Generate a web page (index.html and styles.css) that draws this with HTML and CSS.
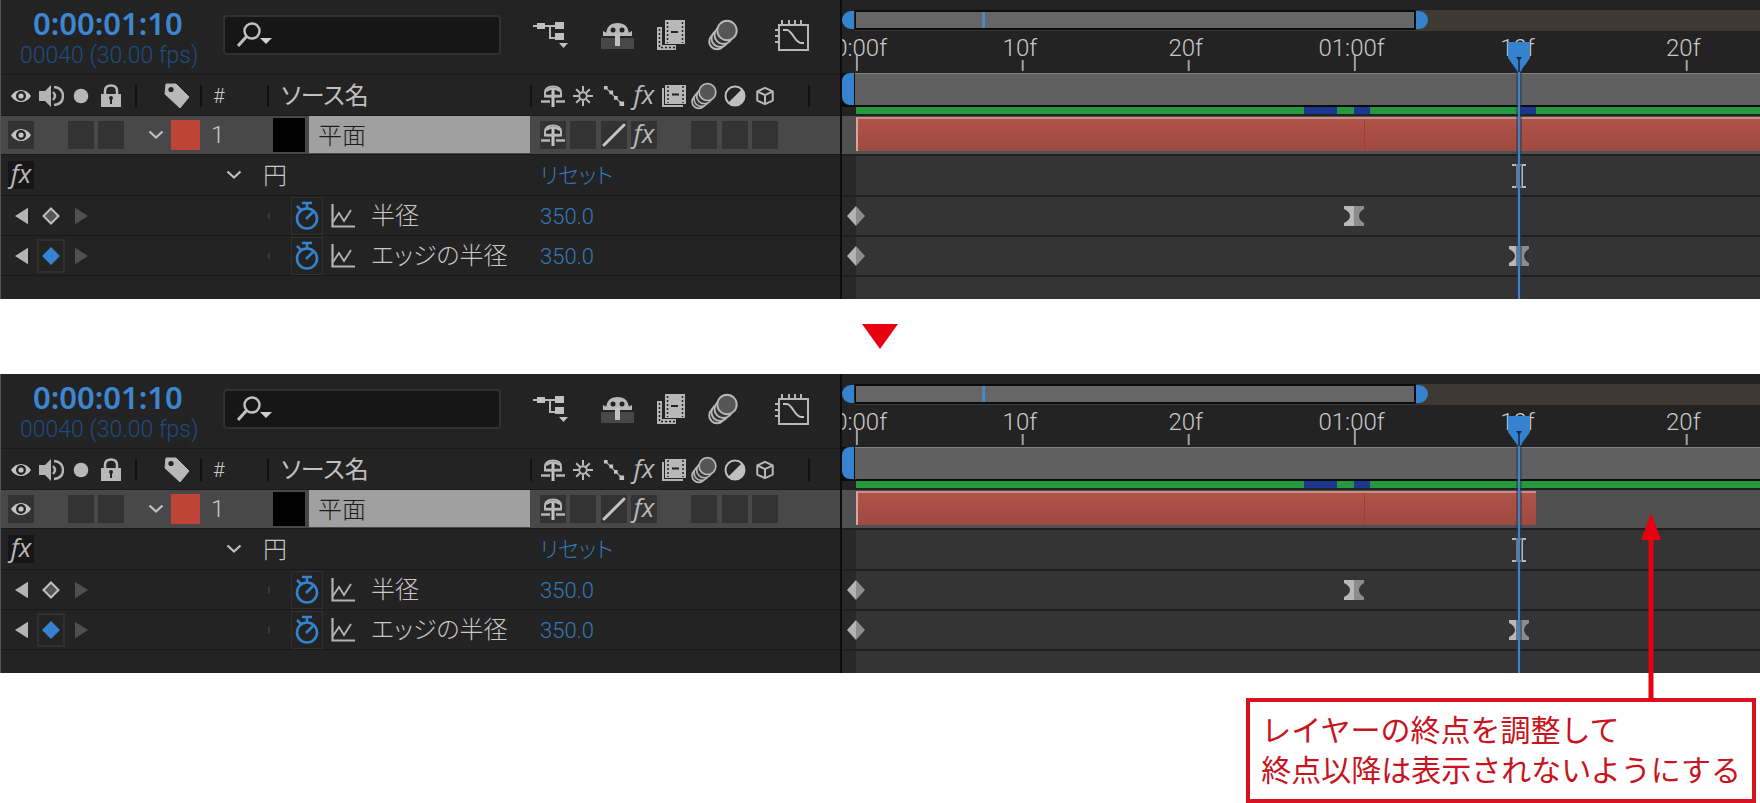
FILE: index.html
```html
<!DOCTYPE html>
<html lang="ja">
<head>
<meta charset="utf-8">
<title>タイムライン</title>
<link rel="stylesheet" href="styles.css">
</head>
<body>
<svg class="sprite" aria-hidden="true">
  <symbol id="eye" viewBox="0 0 22 16"><path d="M1 8C6 0 16 0 21 8C16 16 6 16 1 8Z" fill="#c4c4c4"/><circle cx="11" cy="8" r="5" fill="#242424"/><circle cx="11" cy="8" r="2.6" fill="#c4c4c4"/></symbol>
  <symbol id="speaker" viewBox="0 0 26 24"><path d="M1 7h6v10H1zM7 7l6-6v22l-6-6z" fill="#b4b4b4"/><path d="M15 8q4 4 0 8M16 3q9 1 9 9t-9 9" fill="none" stroke="#b4b4b4" stroke-width="2.400"/></symbol>
  <symbol id="dot" viewBox="0 0 16 16"><circle cx="8" cy="8" r="7.300" fill="#b8b8b8"/></symbol>
  <symbol id="lock" viewBox="0 0 20 24"><path d="M0 10h20v13H0z" fill="#b8b8b8"/><path d="M4 10V7q0-5.500 6-5.500t6 5.500v3" fill="none" stroke="#b8b8b8" stroke-width="2.500"/><circle cx="10" cy="14" r="2" fill="#222"/><path d="M9 14h2v6H9z" fill="#222"/></symbol>
  <symbol id="tag" viewBox="0 0 26 26"><path d="M2 1L12 1L25 14L16 25L1 11Z" fill="#b8b8b8" stroke="#b8b8b8" stroke-linejoin="round"/><circle cx="7" cy="6.500" r="2.600" fill="#222"/></symbol>
  <symbol id="chevron" viewBox="0 0 16 10"><path d="M1.500 1.500L8 7.500L14.500 1.500" fill="none" stroke="#c0c0c0" stroke-width="2.200"/></symbol>
  <symbol id="shy" viewBox="0 0 26 24"><path d="M5 12.500V9Q5 2.500 13 2.500t8 6.500v3.500z" fill="#242424" stroke="#b8b8b8" stroke-width="2"/><path d="M11.500 4h3v19h-3z" fill="#c4c4c4"/><path d="M6 12h14" stroke="#b8b8b8" stroke-width="2.500"/><path d="M6 7q7-5 14 0" fill="none" stroke="#b8b8b8" stroke-width="2.500"/><path d="M1 17.500h9M16 17.500h9" stroke="#b4b4b4" stroke-width="2.500"/></symbol>
  <symbol id="sun" viewBox="0 0 22 22"><circle cx="11" cy="11" r="4.200" fill="none" stroke="#b8b8b8" stroke-width="2.200"/><path d="M11 0v6M11 16v6M0 11h6M16 11h6M3.500 3.500l4 4M14.500 14.500l4 4M18.500 3.500l-4 4M7.500 14.500l-4 4" stroke="#b8b8b8" stroke-width="2.200"/></symbol>
  <symbol id="steps" viewBox="0 0 24 24"><path d="M2 2L22 22" stroke="#999" stroke-width="1.500"/><path d="M1 1h4v4H1zM7 6h4v4H7zM12 12h4v4h-4zM18 18h5v5h-5z" fill="#c4c4c4"/></symbol>
  <symbol id="slash" viewBox="0 0 24 24"><path d="M2 22L22 2" stroke="#c4c4c4" stroke-width="3" stroke-linecap="round"/></symbol>
  <symbol id="film" viewBox="0 0 26 24"><path d="M2 4v18h20" fill="none" stroke="#b4b4b4" stroke-width="2"/><path d="M4 1h21v19H4z" fill="#b8b8b8"/><path d="M7 2v17M22 2v17" stroke="#222" stroke-width="1.500" stroke-dasharray="2 2"/><path d="M11 10.500h7" stroke="#222" stroke-width="2"/></symbol>
  <symbol id="film-large" viewBox="0 0 30 32"><path d="M1 8h5v18h14v5H1z" fill="#b4b4b4"/><path d="M9 1h20v24H9z" fill="#b8b8b8"/><path d="M11.500 3v21M26.500 3v21M3.500 10v20" stroke="#222" stroke-width="1.500" stroke-dasharray="2 2"/><path d="M5 28.500h14" stroke="#222" stroke-width="1.500" stroke-dasharray="2 2"/><path d="M15 13h7" stroke="#222" stroke-width="2"/></symbol>
  <symbol id="blur" viewBox="0 0 30 32"><g fill="#333" stroke="#b8b8b8" stroke-width="1.900"><circle cx="9" cy="22.500" r="7.800"/><circle cx="12" cy="19.500" r="8.500"/><circle cx="15.500" cy="16" r="9"/><circle cx="19" cy="11.500" r="9.700" fill="#565656"/></g></symbol>
  <symbol id="contrast" viewBox="0 0 22 22"><circle cx="11" cy="11" r="9.500" fill="#242424" stroke="#c0c0c0" stroke-width="2"/><path d="M18 4A9.700 9.700 0 0 1 4 18Z" fill="#c0c0c0"/></symbol>
  <symbol id="cube" viewBox="0 0 22 22"><path d="M11 2L19.500 6v10L11 20L2.500 16V6ZM2.500 6L11 10L19.500 6M11 10v10" fill="none" stroke="#b8b8b8" stroke-width="2.200" stroke-linejoin="round"/></symbol>
  <symbol id="flow" viewBox="0 0 36 28"><path d="M0 5h22M17 5v12h6" fill="none" stroke="#b8b8b8" stroke-width="2"/><path d="M4 2h8v6H4zM22 1h9v7h-9zM22 12h9v7h-9zM26 22h9l-4.500 5z" fill="#c0c0c0"/></symbol>
  <symbol id="shy-large" viewBox="0 0 34 28"><path d="M1 17h33v11H1z" fill="#484848"/><path d="M6 13Q7 2 17.500 2T29 13z" fill="#b8b8b8"/><path d="M3 10v5h29v-5l-4 2H7z" fill="#b8b8b8"/><circle cx="13" cy="9" r="2.500" fill="#222"/><circle cx="22" cy="9" r="2.500" fill="#222"/><path d="M15 13h5v12h-5z" fill="#c0c0c0"/></symbol>
  <symbol id="graph" viewBox="0 0 34 34"><path d="M4 7h29v25H4zM7 7V2M14 7V2M20 7V2M26 7V2M4 12H0M4 18H0M4 24H0" fill="none" stroke="#b8b8b8" stroke-width="2"/><path d="M8 12h4c5 0 8 13 14 13h3" fill="none" stroke="#c0c0c0" stroke-width="2"/></symbol>
  <symbol id="search" viewBox="0 0 36 26"><circle cx="15" cy="9" r="7.500" fill="none" stroke="#c0c0c0" stroke-width="2.400"/><path d="M10 14L1 24" stroke="#c0c0c0" stroke-width="3"/><path d="M23 16h12l-6 6z" fill="#d0d0d0"/></symbol>
  <symbol id="prev" viewBox="0 0 14 18"><path d="M14 0v18L0 9Z" fill="#b4b4b4"/></symbol>
  <symbol id="next" viewBox="0 0 14 18"><path d="M0 0v18L14 9Z" fill="#505050"/></symbol>
  <symbol id="key-empty" viewBox="0 0 18 18"><path d="M9 1.500L16.500 9L9 16.500L1.500 9Z" fill="#555" stroke="#c0c0c0" stroke-width="2"/></symbol>
  <symbol id="key-set" viewBox="0 0 18 18"><path d="M9 0L18 9L9 18L0 9Z" fill="#3582cf"/></symbol>
  <symbol id="watch" viewBox="0 0 26 30"><circle cx="13" cy="17.500" r="10" fill="none" stroke="#3582cf" stroke-width="2.600"/><path d="M8 2h10M13 2v5M12 18l7-7M3 5l4 4" stroke="#3582cf" stroke-width="2.500"/></symbol>
  <symbol id="plot" viewBox="0 0 24 24"><path d="M1.500 0v22.500H24" fill="none" stroke="#b4b4b4" stroke-width="2.200"/><path d="M2 18L8 9l5 8L20 6" fill="none" stroke="#b4b4b4" stroke-width="1.800"/></symbol>
  <symbol id="key-linear" viewBox="0 0 18 20"><path d="M9 0L0 10L9 20Z" fill="#b4b4b4"/><path d="M9 0L18 10L9 20Z" fill="#8c8c8c"/></symbol>
  <symbol id="key-ease" viewBox="0 0 20 20"><path d="M0 0h10v20H0v-3q6-3 6-7T0 3z" fill="#b8b8b8"/><path d="M20 0H10v20h10v-3q-5-3-5-7t5-7z" fill="#8c8c8c"/></symbol>
  <symbol id="ibeam" viewBox="0 0 14 24"><path d="M0 1h14M0 23h14M5 1v22M10 1v22" stroke="#b4b8bc" stroke-width="2"/></symbol>
  <symbol id="head" viewBox="0 0 22 30"><path d="M0 0h22v16L12 30h-2L0 16Z" fill="#3582cf"/><path d="M8 15h6l-3 4z" fill="#16283c"/><path d="M11 18v12" stroke="#1b3d63" stroke-width="2"/></symbol>
</svg>

<main class="page">
  <section class="panel">
    <div class="outline">
      <div class="toolbar">
        <div class="time"><span class="timecode">0:00:01:10</span><span class="frames">00040 (30.00 fps)</span></div>
        <label class="search"><svg class="i-search"><use href="#search"/></svg><input type="text" aria-label="検索"></label>
        <div class="tools">
          <button aria-label="フローチャート"><svg class="i-flow"><use href="#flow"/></svg></button>
          <button aria-label="シャイ"><svg class="i-shy-large"><use href="#shy-large"/></svg></button>
          <button aria-label="フレームブレンド"><svg class="i-large"><use href="#film-large"/></svg></button>
          <button aria-label="モーションブラー"><svg class="i-large"><use href="#blur"/></svg></button>
          <button aria-label="グラフエディター"><svg class="i-graph"><use href="#graph"/></svg></button>
        </div>
      </div>
      <div class="row head-row">
        <div class="av"><svg class="i-eye"><use href="#eye"/></svg><svg class="i-26"><use href="#speaker"/></svg><svg class="i-16"><use href="#dot"/></svg><svg class="i-lock"><use href="#lock"/></svg></div>
        <div class="label sep"><svg class="i-26"><use href="#tag"/></svg></div>
        <div class="num sep">#</div>
        <div class="name sep">ソース名</div>
        <div class="switches sep">
          <svg class="i-26"><use href="#shy"/></svg><svg class="i-20"><use href="#sun"/></svg><svg class="i-22"><use href="#steps"/></svg><span class="fx">fx</span><svg class="i-26"><use href="#film"/></svg><svg class="i-28"><use href="#blur"/></svg><svg class="i-22"><use href="#contrast"/></svg><svg class="i-20"><use href="#cube"/></svg>
        </div>
        <div class="sep"></div>
      </div>
      <div class="row layer-row">
        <div class="av"><button class="cell" aria-label="表示"><svg class="i-eye"><use href="#eye"/></svg></button><span></span><button class="cell" aria-label="ソロ"></button><button class="cell" aria-label="ロック"></button></div>
        <div class="label"><button aria-label="開く"><svg class="i-chevron"><use href="#chevron"/></svg></button><span class="swatch"></span></div>
        <div class="num">1</div>
        <div class="name"><span class="thumb"></span><span class="layer-name">平面</span></div>
        <div class="switches">
          <button class="cell" aria-label="シャイ"><svg class="i-26"><use href="#shy"/></svg></button><button class="cell" aria-label="コラップス"></button><button class="cell" aria-label="画質"><svg class="i-24"><use href="#slash"/></svg></button><button class="cell fx">fx</button><span></span><button class="cell" aria-label="モーションブラー"></button><button class="cell" aria-label="調整レイヤー"></button><button class="cell" aria-label="3D"></button>
        </div>
      </div>
      <div class="row prop-row">
        <div class="av"><button class="cell dark fx">fx</button></div>
        <div class="twirl"><button aria-label="開く"><svg class="i-chevron"><use href="#chevron"/></svg></button></div>
        <div class="group">円</div>
        <button class="value reset">リセット</button>
      </div>
      <div class="row prop-row">
        <div class="av"><button aria-label="前のキー"><svg class="i-arrow"><use href="#prev"/></svg></button><button class="key" aria-label="キー"><svg class="i-18"><use href="#key-empty"/></svg></button><button aria-label="次のキー"><svg class="i-arrow"><use href="#next"/></svg></button></div>
        <div></div>
        <div class="prop"><span class="bullet"></span><button class="watch" aria-label="ストップウォッチ"><svg class="i-watch"><use href="#watch"/></svg></button><svg class="i-24"><use href="#plot"/></svg><span class="prop-name">半径</span></div>
        <span class="value">350.0</span>
      </div>
      <div class="row prop-row">
        <div class="av"><button aria-label="前のキー"><svg class="i-arrow"><use href="#prev"/></svg></button><button class="key framed" aria-label="キー"><svg class="i-18"><use href="#key-set"/></svg></button><button aria-label="次のキー"><svg class="i-arrow"><use href="#next"/></svg></button></div>
        <div></div>
        <div class="prop"><span class="bullet"></span><button class="watch" aria-label="ストップウォッチ"><svg class="i-watch"><use href="#watch"/></svg></button><svg class="i-24"><use href="#plot"/></svg><span class="prop-name">エッジの半径</span></div>
        <span class="value">350.0</span>
      </div>
      <div class="row prop-row"></div>
    </div>
    <div class="timeline">
      <div class="navigator"><span class="grip start"></span><div class="nav-track"><div class="nav-range" style="width:62%"><span class="nav-mark"></span></div><span class="grip end"></span></div></div>
      <div class="ruler"><div class="scale">
        <span class="tick major" style="--f:0">00:00f</span><span class="tick" style="--f:10">10f</span><span class="tick" style="--f:20">20f</span><span class="tick major" style="--f:30">01:00f</span><span class="tick" style="--f:40">10f</span><span class="tick" style="--f:50">20f</span>
      </div></div>
      <div class="work"><span class="grip work-start"></span><div class="work-bar"></div></div>
      <div class="cache"><div class="scale"><span class="cached" style="--f:27;--n:2"></span><span class="cached" style="--f:30;--n:1"></span><span class="cached" style="--f:40;--n:1"></span></div></div>
      <div class="track layer-track"><div class="scale"><div class="bar" style="--n:54.5"></div><span class="marker-line" style="--f:30.6"></span></div></div>
      <div class="track"><div class="scale"><svg class="item i-ibeam" style="--f:40"><use href="#ibeam"/></svg></div></div>
      <div class="track"><div class="scale"><svg class="item i-key" style="--f:0"><use href="#key-linear"/></svg><svg class="item i-20" style="--f:30"><use href="#key-ease"/></svg></div></div>
      <div class="track"><div class="scale"><svg class="item i-key" style="--f:0"><use href="#key-linear"/></svg><svg class="item i-20" style="--f:40"><use href="#key-ease"/></svg></div></div>
      <div class="track"></div>
      <div class="overlay"><div class="playhead" style="--f:40"><svg class="i-head"><use href="#head"/></svg></div></div>
    </div>
  </section>

  <svg class="down" viewBox="0 0 36 25" aria-hidden="true"><path d="M0 0h36L18 25Z" fill="#e60012"/></svg>

  <section class="panel">
    <div class="outline">
      <div class="toolbar">
        <div class="time"><span class="timecode">0:00:01:10</span><span class="frames">00040 (30.00 fps)</span></div>
        <label class="search"><svg class="i-search"><use href="#search"/></svg><input type="text" aria-label="検索"></label>
        <div class="tools">
          <button aria-label="フローチャート"><svg class="i-flow"><use href="#flow"/></svg></button>
          <button aria-label="シャイ"><svg class="i-shy-large"><use href="#shy-large"/></svg></button>
          <button aria-label="フレームブレンド"><svg class="i-large"><use href="#film-large"/></svg></button>
          <button aria-label="モーションブラー"><svg class="i-large"><use href="#blur"/></svg></button>
          <button aria-label="グラフエディター"><svg class="i-graph"><use href="#graph"/></svg></button>
        </div>
      </div>
      <div class="row head-row">
        <div class="av"><svg class="i-eye"><use href="#eye"/></svg><svg class="i-26"><use href="#speaker"/></svg><svg class="i-16"><use href="#dot"/></svg><svg class="i-lock"><use href="#lock"/></svg></div>
        <div class="label sep"><svg class="i-26"><use href="#tag"/></svg></div>
        <div class="num sep">#</div>
        <div class="name sep">ソース名</div>
        <div class="switches sep">
          <svg class="i-26"><use href="#shy"/></svg><svg class="i-20"><use href="#sun"/></svg><svg class="i-22"><use href="#steps"/></svg><span class="fx">fx</span><svg class="i-26"><use href="#film"/></svg><svg class="i-28"><use href="#blur"/></svg><svg class="i-22"><use href="#contrast"/></svg><svg class="i-20"><use href="#cube"/></svg>
        </div>
        <div class="sep"></div>
      </div>
      <div class="row layer-row">
        <div class="av"><button class="cell" aria-label="表示"><svg class="i-eye"><use href="#eye"/></svg></button><span></span><button class="cell" aria-label="ソロ"></button><button class="cell" aria-label="ロック"></button></div>
        <div class="label"><button aria-label="開く"><svg class="i-chevron"><use href="#chevron"/></svg></button><span class="swatch"></span></div>
        <div class="num">1</div>
        <div class="name"><span class="thumb"></span><span class="layer-name">平面</span></div>
        <div class="switches">
          <button class="cell" aria-label="シャイ"><svg class="i-26"><use href="#shy"/></svg></button><button class="cell" aria-label="コラップス"></button><button class="cell" aria-label="画質"><svg class="i-24"><use href="#slash"/></svg></button><button class="cell fx">fx</button><span></span><button class="cell" aria-label="モーションブラー"></button><button class="cell" aria-label="調整レイヤー"></button><button class="cell" aria-label="3D"></button>
        </div>
      </div>
      <div class="row prop-row">
        <div class="av"><button class="cell dark fx">fx</button></div>
        <div class="twirl"><button aria-label="開く"><svg class="i-chevron"><use href="#chevron"/></svg></button></div>
        <div class="group">円</div>
        <button class="value reset">リセット</button>
      </div>
      <div class="row prop-row">
        <div class="av"><button aria-label="前のキー"><svg class="i-arrow"><use href="#prev"/></svg></button><button class="key" aria-label="キー"><svg class="i-18"><use href="#key-empty"/></svg></button><button aria-label="次のキー"><svg class="i-arrow"><use href="#next"/></svg></button></div>
        <div></div>
        <div class="prop"><span class="bullet"></span><button class="watch" aria-label="ストップウォッチ"><svg class="i-watch"><use href="#watch"/></svg></button><svg class="i-24"><use href="#plot"/></svg><span class="prop-name">半径</span></div>
        <span class="value">350.0</span>
      </div>
      <div class="row prop-row">
        <div class="av"><button aria-label="前のキー"><svg class="i-arrow"><use href="#prev"/></svg></button><button class="key framed" aria-label="キー"><svg class="i-18"><use href="#key-set"/></svg></button><button aria-label="次のキー"><svg class="i-arrow"><use href="#next"/></svg></button></div>
        <div></div>
        <div class="prop"><span class="bullet"></span><button class="watch" aria-label="ストップウォッチ"><svg class="i-watch"><use href="#watch"/></svg></button><svg class="i-24"><use href="#plot"/></svg><span class="prop-name">エッジの半径</span></div>
        <span class="value">350.0</span>
      </div>
      <div class="row prop-row"></div>
    </div>
    <div class="timeline">
      <div class="navigator"><span class="grip start"></span><div class="nav-track"><div class="nav-range" style="width:62%"><span class="nav-mark"></span></div><span class="grip end"></span></div></div>
      <div class="ruler"><div class="scale">
        <span class="tick major" style="--f:0">00:00f</span><span class="tick" style="--f:10">10f</span><span class="tick" style="--f:20">20f</span><span class="tick major" style="--f:30">01:00f</span><span class="tick" style="--f:40">10f</span><span class="tick" style="--f:50">20f</span>
      </div></div>
      <div class="work"><span class="grip work-start"></span><div class="work-bar"></div></div>
      <div class="cache"><div class="scale"><span class="cached" style="--f:27;--n:2"></span><span class="cached" style="--f:30;--n:1"></span></div></div>
      <div class="track layer-track"><div class="scale"><div class="bar" style="--n:41"></div><span class="marker-line" style="--f:30.6"></span></div></div>
      <div class="track"><div class="scale"><svg class="item i-ibeam" style="--f:40"><use href="#ibeam"/></svg></div></div>
      <div class="track"><div class="scale"><svg class="item i-key" style="--f:0"><use href="#key-linear"/></svg><svg class="item i-20" style="--f:30"><use href="#key-ease"/></svg></div></div>
      <div class="track"><div class="scale"><svg class="item i-key" style="--f:0"><use href="#key-linear"/></svg><svg class="item i-20" style="--f:40"><use href="#key-ease"/></svg></div></div>
      <div class="track"></div>
      <div class="overlay"><div class="playhead" style="--f:40"><svg class="i-head"><use href="#head"/></svg></div></div>
    </div>
  </section>

  <aside class="callout">
    <svg class="pointer" viewBox="0 0 20 189" aria-hidden="true"><path d="M10 0L20 27H12.500V189H7.500V27H0Z" fill="#e60012"/></svg>
    <p>レイヤーの終点を調整して<br>終点以降は表示されないようにする</p>
  </aside>
</main>
</body>
</html>
```

FILE: styles.css
```css
* { box-sizing: border-box; }

body {
  margin: 0;
  background: #fff;
  color: #c8c8c8;
  font-family: Roboto, "Noto Sans CJK JP", sans-serif;
  font-size: 24px;
  font-weight: 300;
  line-height: 32px;
}

button {
  display: flex;
  align-items: center;
  justify-content: center;
  margin: 0;
  padding: 0;
  border: 0;
  background: none;
  color: inherit;
  font: inherit;
}

svg { display: block; flex: none; }
.sprite { position: absolute; width: 0; height: 0; }

.page { display: flex; flex-direction: column; }

.panel {
  display: grid;
  grid-template-columns: 840px 1fr;
  background: #232323;
}

.outline {
  display: grid;
  grid-template-rows: 75px 41px 38px 41px 40px 40px 24px;
  border-left: 1px solid #555;
}

/* toolbar */
.toolbar {
  display: grid;
  grid-template-columns: 222px 278px 1fr;
  border-bottom: 1px solid #1a1a1a;
}
.time { display: flex; flex-direction: column; padding: 6px 0 0 19px; white-space: nowrap; }
.timecode {
  padding-left: 13px;
  color: #3d86d2;
  font-family: "Noto Sans", sans-serif;
  font-size: 31px;
  font-weight: 600;
  line-height: 34px;
}
.frames { color: #1f4c80; font-size: 23px; line-height: 32px; }
.search {
  display: flex;
  align-items: center;
  gap: 8px;
  height: 40px;
  margin-top: 15px;
  padding: 0 12px;
  background: #161616;
  border: 2px solid #313131;
  border-radius: 4px;
}
.search input {
  flex: 1;
  min-width: 0;
  border: 0;
  outline: 0;
  background: none;
  color: #c8c8c8;
  font: inherit;
}
.tools {
  display: flex;
  gap: 22px;
  height: 34px;
  margin: 18px 0 0 32px;
}
.tools button:first-child { margin-right: 9px; }
.tools button:last-child { margin-left: 15px; }

/* rows */
.row {
  display: grid;
  grid-template-columns: 134px 65px 67px 263px 278px 1fr;
  align-items: center;
}
.av {
  display: grid;
  grid-template-columns: repeat(4, 26px);
  column-gap: 4px;
  align-items: center;
  justify-items: center;
  padding-left: 7px;
}
.sep { height: 22px; border-left: 2px solid #111; }
.num { padding-left: 11px; }
.switches {
  display: grid;
  grid-template-columns: repeat(8, 1fr);
  column-gap: 4px;
  align-items: center;
  justify-items: center;
  padding: 0 30px 0 10px;
}
.head-row { padding-top: 2px; border-bottom: 1px solid #1a1a1a; }
.head-row .sep { display: flex; align-items: center; }
.head-row .switches { display: grid; grid-template-rows: 22px; padding-left: 8px; }
.head-row .label { justify-content: center; padding-left: 16px; }
.head-row .name { padding-left: 12px; font-weight: 400; color: #c0c0c0; font-feature-settings: "palt"; }
.head-row .num { font-size: 20px; }

.layer-row { background: #484848; }
.layer-row .label { display: flex; align-items: center; gap: 7px; padding-left: 13px; }
.layer-row .name {
  display: grid;
  grid-template-columns: 32px 1fr;
  column-gap: 4px;
  height: 38px;
  padding-left: 6px;
}
.swatch { width: 29px; height: 30px; background: #bd4436; }
.thumb { height: 34px; margin-top: 2px; background: #000; }
.layer-name { height: 37px; padding-left: 9px; background: #a0a0a0; color: #1c1c1c; line-height: 40px; }
.cell { width: 26px; height: 28px; background: #333; }
.cell.dark { background: #161616; }
.fx {
  padding-bottom: 4px;
  color: #b8b8b8;
  font-family: "Open Sans", sans-serif;
  font-size: 26px;
  font-style: italic;
  font-weight: 400;
  line-height: 22px;
}

.prop-row {
  grid-template-columns: 129px 132px 278px 1fr;
  border-top: 1px solid #191919;
}
.twirl { display: flex; justify-content: flex-end; padding-right: 20px; }
.group { padding: 2px 0 0 1px; }
.prop { display: flex; align-items: center; padding-left: 6px; }
.bullet { width: 2px; height: 6px; margin-right: 21px; background: #3a3a3a; }
.watch { width: 32px; height: 38px; margin-right: 8px; border: 1px solid #303030; }
.prop-name { padding-left: 16px; font-feature-settings: "palt"; }
.key { width: 28px; height: 34px; }
.framed { border: 2px solid #303030; }
.value { justify-self: start; padding-top: 2px; color: #3378bd; font-size: 22px; font-feature-settings: "palt"; }

/* timeline */
.timeline {
  position: relative;
  display: grid;
  grid-template-rows: 31px 42px 34px 9px 38px 41px 40px 40px 24px;
  min-width: 0;
  overflow: hidden;
  border-left: 2px solid #0c0c0c;
}
.scale { position: relative; height: 100%; margin-left: 14px; }
.grip { display: block; width: 12px; background: #3582cf; }

.navigator { display: flex; padding-top: 10px; }
.navigator .grip { height: 18px; margin-top: 1px; }
.start { margin-right: 1px; border-radius: 9px 0 0 9px; }
.nav-track { display: flex; flex: 1; background: #3e3933; }
.nav-range { height: 20px; background: #666; border: solid #0c0c0c; border-width: 2px 2px 2px 1px; }
.nav-mark { display: block; width: 3px; height: 16px; margin-left: 22.5%; background: #4a87c4; }
.end { border-radius: 0 9px 9px 0; }

.tick {
  position: absolute;
  top: 0;
  left: calc(var(--f) / 54.5 * 100%);
  padding-right: 4px;
  transform: translateX(-50%);
  line-height: 34px;
}
.tick::after {
  content: "";
  position: absolute;
  top: 29px;
  left: 50%;
  width: 2px;
  height: 11px;
  background: #a0a0a0;
}
.tick.major::after { top: 24px; height: 16px; }

.work { display: flex; background: #0c0c0c; }
.work-start { height: 32px; margin-right: 1px; border-radius: 8px 0 0 8px; }
.work-bar { flex: 1; height: 32px; background: #606060; border-top: 1px solid #808080; }
.cache { padding-bottom: 2px; background: #222; }
.cache .scale { background: #26993d; }
.cached {
  position: absolute;
  top: 0;
  left: calc(var(--f) / 54.5 * 100%);
  width: calc(var(--n) / 54.5 * 100%);
  height: 100%;
  background: #1c378f;
}
.track {
  border-top: 2px solid #1f1f1f;
  background: linear-gradient(90deg, #282828 14px, #343434 14px);
}
.layer-track { padding: 1px 0 3px; border-top: 0; background: #505050; }
.bar {
  width: calc(var(--n) / 54.5 * 100%);
  height: 34px;
  background: linear-gradient(#b05248, #9e4a41);
  border-top: 2px solid #c4908a;
  border-left: 2px solid #d8a49e;
}
.marker-line { position: absolute; top: 2px; bottom: 0; left: calc(var(--f) / 54.5 * 100%); width: 1px; background: #a33d34; }
.item {
  position: absolute;
  top: 50%;
  left: calc(var(--f) / 54.5 * 100%);
  transform: translate(-50%, -50%);
}
.overlay { position: absolute; inset: 42px 0 0 14px; }
.playhead {
  position: absolute;
  top: 0;
  bottom: 0;
  left: calc(var(--f) / 54.5 * 100%);
  display: flex;
  justify-content: center;
  width: 22px;
  transform: translateX(-50%);
  background: linear-gradient(90deg, transparent 8px, #1c3a5e80 8px, #1c3a5e80 10px, #4c80b8 10px, #4c80b8 12px, #1c3a5e80 12px, #1c3a5e80 14px, transparent 14px);
}

/* icon sizes */
.i-eye { width: 22px; height: 16px; }
.i-16 { width: 16px; height: 16px; }
.i-18 { width: 18px; height: 18px; }
.i-20 { width: 20px; height: 20px; }
.i-22 { width: 22px; height: 22px; }
.i-24 { width: 24px; height: 24px; }
.i-26 { width: 26px; height: 26px; }
.i-28 { width: 26px; height: 28px; }
.i-lock { width: 20px; height: 24px; }
.i-chevron { width: 16px; height: 10px; }
.i-arrow { width: 13px; height: 18px; }
.i-watch { width: 26px; height: 30px; }
.i-flow { width: 36px; height: 28px; }
.i-shy-large { width: 34px; height: 28px; }
.i-large { width: 30px; height: 32px; }
.i-graph { width: 34px; height: 34px; }
.i-search { width: 36px; height: 26px; }
.i-key { width: 18px; height: 20px; }
.i-ibeam { width: 14px; height: 24px; }
.i-head { width: 22px; height: 30px; }

.down { width: 36px; height: 25px; margin: 25px auto; }

.callout {
  position: relative;
  align-self: flex-end;
  margin: 25px 4px 0 0;
  padding: 9px 11px 8px;
  border: 4px solid #d7111f;
  color: #c81420;
  font-size: 30px;
  font-weight: 400;
  line-height: 40px;
}
.callout p { margin: 0; }
.pointer { position: absolute; right: 91px; bottom: 100%; width: 20px; height: 189px; }
```
